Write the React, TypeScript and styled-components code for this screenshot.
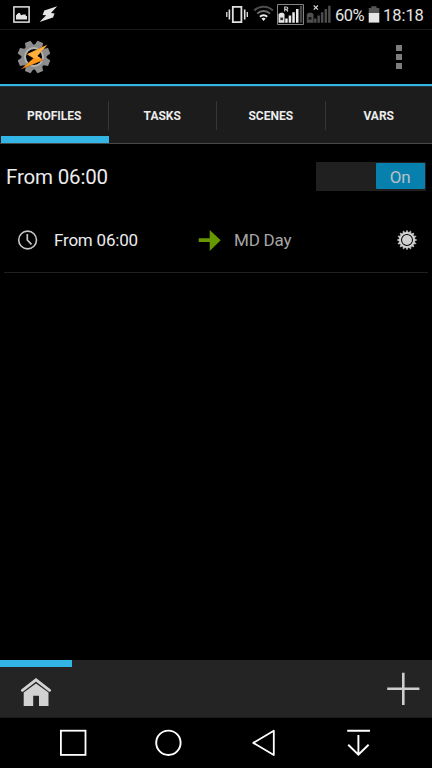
import React from 'react';
import styled, { createGlobalStyle } from 'styled-components';

const GlobalStyle = createGlobalStyle`
  * { box-sizing: border-box; }
  body { margin: 0; background: #000; overflow: hidden; }
`;

const Screen = styled.div`
  width: 432px;
  height: 768px;
  display: flex;
  flex-direction: column;
  background: #000;
  color: #e6e6e6;
  font-family: Roboto, sans-serif;
`;

const Icon = styled.svg<{ $ml?: number }>`
  display: block;
  flex: none;
  margin-left: ${(p) => p.$ml ?? 0}px;
`;

const StatusBar = styled.header`
  height: 30px;
  flex: none;
  display: flex;
  align-items: flex-start;
  border-bottom: 1px solid #181818;
`;

const StatusSpacer = styled.div`
  flex: 1;
`;

const StatusText = styled.span<{ $width: number; $ml: number; $tracking?: number }>`
  width: ${(p) => p.$width}px;
  margin-left: ${(p) => p.$ml}px;
  height: 29px;
  line-height: 31px;
  font-size: 16.5px;
  letter-spacing: ${(p) => p.$tracking ?? 0}px;
  white-space: nowrap;
`;

const ActionBar = styled.div`
  height: 56px;
  flex: none;
  display: flex;
  justify-content: space-between;
  padding: 10px 30px 0 17px;
  border-bottom: 2px solid #33b5e5;
`;

const Overflow = styled.button`
  display: flex;
  flex-direction: column;
  gap: 3px;
  padding: 5px 0 0 0;
  border: 0;
  background: none;
`;

const OverflowDot = styled.i`
  width: 6px;
  height: 6px;
  background: #7d7d7d;
`;

const Tabs = styled.nav`
  height: 58px;
  flex: none;
  display: grid;
  grid-template-columns: 108.5px 108.5px 108.5px 106.5px;
  background: #1c1c1c;
  border-top: 1px solid #24343b;
  border-bottom: 1px solid #484848;
`;

const Tab = styled.div<{ $active?: boolean }>`
  display: flex;
  align-items: center;
  margin-left: ${(p) => (p.$active ? 1 : 0)}px;
  box-shadow: ${(p) => (p.$active ? 'inset 0 -7px #33b5e5' : 'none')};
`;

const TabLabel = styled.span`
  flex: 1;
  height: 29px;
  line-height: 30px;
  border-right: 1px solid #363636;
  text-align: center;
  font-size: 12px;
  font-weight: 700;
  color: #ececec;
  ${Tab}:last-child & { border-color: transparent; padding-left: 1px; }
`;

const Content = styled.main`
  flex: 1;
  padding: 0 4px;
`;

const ProfileHeader = styled.div`
  height: 65px;
  display: flex;
  align-items: center;
  justify-content: space-between;
  padding: 0 2px;
`;

const ProfileName = styled.h1`
  margin: 0;
  font-size: 20.5px;
  letter-spacing: -0.17px;
  line-height: 24px;
  font-weight: 400;
  color: #ececec;
`;

const Switch = styled.div`
  width: 110px;
  height: 29px;
  margin-bottom: 1px;
  padding: 1px;
  display: flex;
  justify-content: flex-end;
  background: #202020;
`;

const Thumb = styled.div`
  width: 49px;
  height: 26px;
  line-height: 28px;
  padding-right: 1px;
  border-radius: 1px;
  background: #0880ae;
  color: #b9c2c5;
  font-size: 17px;
  letter-spacing: -0.3px;
  text-align: center;
`;

const ProfileRow = styled.div`
  height: 64px;
  display: flex;
  align-items: center;
  padding-bottom: 2px;
  border-bottom: 1px solid #202020;
`;

const RowText = styled.span<{ $width: number; $ml: number; $dim?: boolean }>`
  width: ${(p) => p.$width}px;
  margin-left: ${(p) => p.$ml}px;
  line-height: 20px;
  font-size: 17px;
  letter-spacing: -0.2px;
  color: ${(p) => (p.$dim ? '#a6a6a6' : '#ececec')};
`;

const ProjectBar = styled.footer`
  height: 58px;
  flex: none;
  display: flex;
  justify-content: space-between;
  background: #242424;
  border-bottom: 1px solid #1b1b1b;
`;

const ProjectTab = styled.div`
  width: 72px;
  border-top: 7px solid #33b5e5;
  display: flex;
  justify-content: center;
  padding-top: 10px;
`;

const AddButton = styled.button`
  border: 0;
  padding: 12px 12px 0 0;
  background: none;
  display: flex;
  align-items: flex-start;
`;

const NavBar = styled.nav`
  height: 50px;
  flex: none;
  display: flex;
  align-items: flex-start;
  padding-top: 10px;
`;

function Gear() {
  return (
    <Icon width="34" height="34" viewBox="0 0 34 34">
      <g fill="#8e8e8e">
        {[22.5, 67.5, 112.5, 157.5, 202.5, 247.5, 292.5, 337.5].map((a) => (
          <path key={a} d="M12.8 6 L14 .6 H20 L21.2 6Z" transform={`rotate(${a} 17 17)`} />
        ))}
      </g>
      <circle cx="17" cy="17" r="10.3" fill="none" stroke="#8b8b8b" strokeWidth="4.6" />
      <circle cx="17" cy="17" r="9" fill="none" stroke="#b4b4b4" strokeWidth="1.8" />
      <path d="M30.4 4.8 L9.8 14.2 L16.4 18.2 L4 29.2 L26.2 20.2 L20.2 16Z" fill="#ff981a" stroke="#5a330d" strokeWidth=".3" />
      <path d="M29.8 5.3 L10.4 14.2 L17 18 L24.5 18.8 L20.2 16Z" fill="#ffb03c" />
    </Icon>
  );
}

export default function App() {
  const teeth = Array.from({ length: 16 }, (_, i) => i * 22.5);
  return (
    <Screen>
      <GlobalStyle />
      <StatusBar>
        <Icon $ml={13} width="17" height="29" viewBox="13 0 17 29">
          <rect x="13.9" y="6.9" width="15.2" height="15.2" fill="none" stroke="#e4e4e4" strokeWidth="1.5" />
          <path d="M16 19.5V15l1-.2v-1h1.2V13h2v1.3l1.3 1 1.5-.7h2.8v1.5H27v3.4z" fill="#e4e4e4" />
        </Icon>
        <Icon $ml={9} width="20" height="29" viewBox="39 0 20 29">
          <path d="M57.2 6.3 L44.3 10.5 L42.6 15 L46.2 15.2 L39.6 22.1 L53 17.6 L54.6 13.4 L51 13Z" fill="#e4e4e4" />
        </Icon>
        <StatusSpacer />
        <Icon width="24" height="29" viewBox="225 0 24 29">
          <g fill="none" stroke="#e2e2e2">
            <path d="M232.8 6.8h8.6v15.4h-8.6z" strokeWidth="1.8" />
            <path d="M229.4 9.5v10M244.7 9.5v10" strokeWidth="1.6" />
            <path d="M226.8 12v5M247.3 12v5" strokeWidth="1.3" />
          </g>
        </Icon>
        <Icon $ml={4} width="21" height="29" viewBox="253 0 21 29">
          <g fill="none" strokeWidth="2">
            <path d="M254.3 10.4a13.7 13.7 0 0 1 18.6 0" stroke="#4e4e4e" />
            <path d="M257.2 13.6a9.2 9.2 0 0 1 12.8 0" stroke="#707070" />
            <path d="M260 16.7a5 5 0 0 1 7.2 0" stroke="#eee" />
          </g>
          <path d="M261.5 18.5q2.1-1.4 4.2 0l-2.1 2.6z" fill="#eee" />
        </Icon>
        <Icon $ml={3} width="28" height="29" viewBox="277 0 28 29">
          <path d="M277.5 4.5h26v20h-26z" fill="none" stroke="#858585" />
          <path d="M278.5 14l2-1.2h2.5l1.5 1.2v8.7h-6z" fill="#e8e8e8" />
          <path d="M280.3 17.5h2.8v2.7h-2.8z" fill="#333" />
          <path d="M284.7 11.5V7h1.7q1.4 0 1.4 1.2t-1.4 1.2h-1.7m1.6 0 1.7 2.1" fill="none" stroke="#c4c4c4" strokeWidth="1.2" />
          <g fill="#eaeaea"><path d="M285.2 18.5h2.5v4.2h-2.5zM288.7 15.5h2.5v7.2h-2.5zM292.3 12.3h2.5v10.4h-2.5zM296 9h2.5v13.7H296z" /></g>
          <path d="M299.8 5.7h2.5v17h-2.5z" fill="#484848" />
        </Icon>
        <Icon $ml={1} width="26" height="29" viewBox="306 0 26 29">
          <path d="M306.8 14l2-1.2h3l1.7 1.2v8.7h-6.7z" fill="#505050" />
          <path d="M308.5 17h3v2.7h-3z" fill="#151515" />
          <path d="M313.7 5.5l4.2 4.2m0-4.2-4.2 4.2" stroke="#d8d8d8" strokeWidth="1.1" />
          <path d="M314 18.5h2.5v4.2H314zM317.4 15.5h2.5v7.2h-2.5zM320.9 12.3h2.5v10.4h-2.5zM324.6 9h2.4v13.7h-2.4zM328.1 5.7h2.5v17h-2.5z" fill="#4c4c4c" />
        </Icon>
        <StatusText $ml={3} $width={33} $tracking={-0.5}>60%</StatusText>
        <Icon width="12" height="29" viewBox="368 0 12 29">
          <path d="M371.3 6.2h5.2v1.9h2.8V14h-10.6V8.1h2.6z" fill="#555" />
          <path d="M368.7 13h10.6v9.6h-10.6z" fill="#e6e6e6" />
        </Icon>
        <StatusText $ml={3} $width={49} $tracking={-0.05}>18:18</StatusText>
      </StatusBar>

      <ActionBar>
        <Gear />
        <Overflow aria-label="More options">
          <OverflowDot /><OverflowDot /><OverflowDot />
        </Overflow>
      </ActionBar>

      <Tabs>
        {['PROFILES', 'TASKS', 'SCENES', 'VARS'].map((t, i) => (
          <Tab key={t} $active={i === 0}><TabLabel>{t}</TabLabel></Tab>
        ))}
      </Tabs>

      <Content>
        <ProfileHeader>
          <ProfileName>From 06:00</ProfileName>
          <Switch><Thumb>On</Thumb></Switch>
        </ProfileHeader>
        <ProfileRow>
          <Icon $ml={13} width="22" height="22" viewBox="0 0 22 22">
            <circle cx="10.6" cy="11" r="8.9" fill="none" stroke="#c6c6c6" strokeWidth="1.6" />
            <path d="M10.3 5v6l4.2 4.4" fill="none" stroke="#c6c6c6" strokeWidth="1.7" />
          </Icon>
          <RowText $ml={15} $width={144}>From 06:00</RowText>
          <Icon width="24" height="24" viewBox="198 228 24 24">
            <path d="M198.7 238.3h11v-8.3l11 10.3-11 10.7v-8.9h-11z" fill="#669900" />
          </Icon>
          <RowText $ml={12} $width={162} $dim>MD Day</RowText>
          <Icon width="22" height="22" viewBox="0 0 22 22">
            <g fill="#d0d0d0">
              {teeth.map((a) => (
                <path key={a} d="M9.5 4.2 L11 1.2 L12.5 4.2Z" stroke="#d0d0d0" strokeWidth=".6" transform={`rotate(${a} 11 11)`} />
              ))}
              <circle cx="11" cy="11" r="5" />
            </g>
            <circle cx="11" cy="11" r="6.9" fill="none" stroke="#d0d0d0" strokeWidth="1.8" />
          </Icon>
        </ProfileRow>
      </Content>

      <ProjectBar>
        <ProjectTab>
          <Icon width="32" height="30" viewBox="20 677 32 30">
            <path d="M23.7 692.6 36 683.4 48.5 692.6v13.4H39v-10.2h-5.8v10.2h-9.5z" fill="#d2d2d2" />
            <path d="M22.4 690.3 36 679.8l13.6 10.5" fill="none" stroke="#d2d2d2" strokeWidth="2.9" strokeLinecap="round" />
          </Icon>
        </ProjectTab>
        <AddButton aria-label="Add profile">
          <Icon width="34" height="34" viewBox="386 672 34 34">
            <path d="M387.2 688.8h32.2M403.3 672.7v32.2" stroke="#cecece" strokeWidth="2.6" />
          </Icon>
        </AddButton>
      </ProjectBar>

      <NavBar>
        <Icon $ml={59} width="30" height="32" viewBox="59 728 30 32">
          <rect x="60.9" y="730.7" width="24.6" height="24.2" fill="none" stroke="#fff" strokeWidth="1.8" />
        </Icon>
        <Icon $ml={65} width="30" height="32" viewBox="154 728 30 32">
          <circle cx="168.4" cy="742.8" r="12.2" fill="none" stroke="#fff" strokeWidth="1.9" />
        </Icon>
        <Icon $ml={67} width="28" height="32" viewBox="251 728 28 32">
          <path d="M273.8 730.8v24.2l-20.5-12.1z" fill="none" stroke="#fff" strokeWidth="1.8" strokeLinejoin="round" />
        </Icon>
        <Icon $ml={66} width="30" height="32" viewBox="345 728 30 32">
          <path d="M347.2 730.8H370M358.4 735v19.3M348.2 744.7l10.2 10 10.2-10" fill="none" stroke="#fff" strokeWidth="1.9" />
        </Icon>
      </NavBar>
    </Screen>
  );
}
